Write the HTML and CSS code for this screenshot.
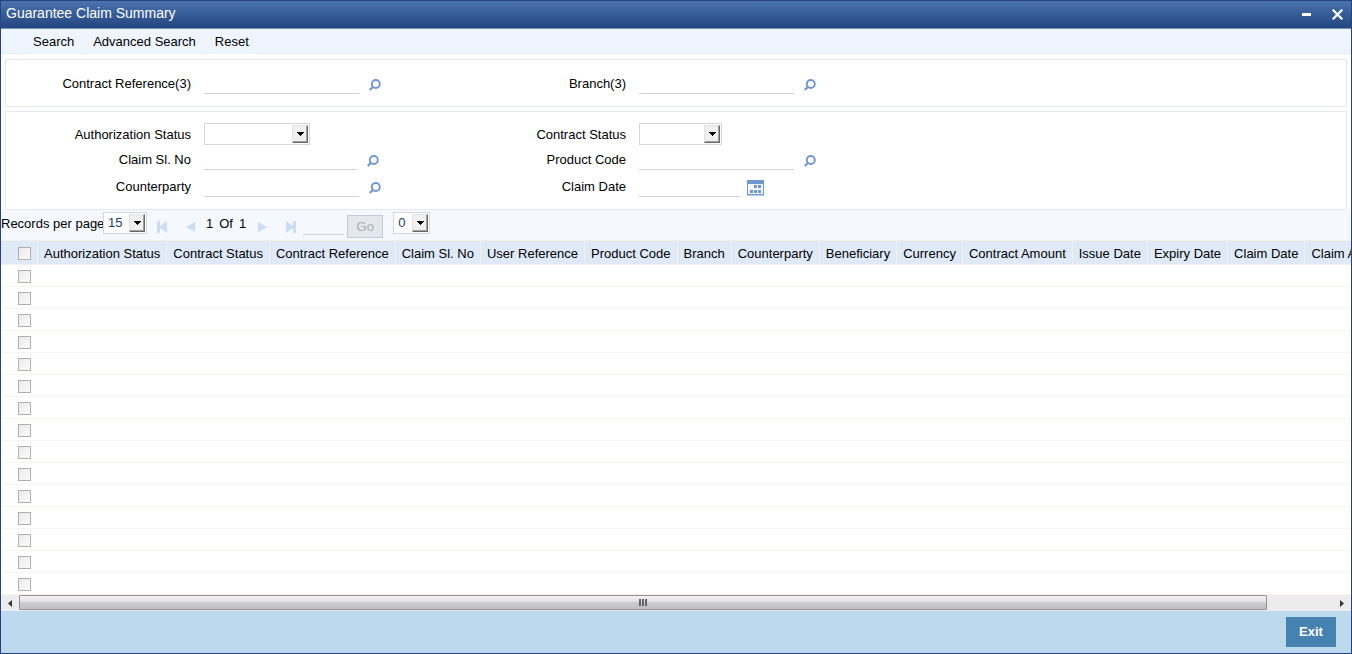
FILE: index.html
```
<!DOCTYPE html>
<html lang="en">
<head>
<meta charset="utf-8">
<meta name="viewport" content="width=device-width, initial-scale=1">
<title>Guarantee Claim Summary</title>
<link rel="stylesheet" href="styles.css">
</head>
<body>
<svg class="defs" width="0" height="0">
  <symbol id="lens" viewBox="0 0 12 12">
    <circle cx="6.8" cy="5" r="4" fill="none" stroke="#6f98d3" stroke-width="1.9"/>
    <path d="M4 7.8 L0.8 11" stroke="#6f98d3" stroke-width="2.2"/>
  </symbol>
  <symbol id="down" viewBox="0 0 7 4">
    <path d="M0 0H7V1H6V2H5V3H4V4H3V3H2V2H1V1H0Z" fill="#000"/>
  </symbol>
</svg>
<div class="window">
  <header class="titlebar">
    <h1>Guarantee Claim Summary</h1>
    <button class="winbtn" aria-label="Minimize"><svg width="11" height="11" shape-rendering="crispEdges"><path d="M1 4H10V7H1Z" fill="#fff"/></svg></button>
    <button class="winbtn" aria-label="Close"><svg width="11" height="11"><path d="M0.7 0.7L10.3 10.3M10.3 0.7L0.7 10.3" stroke="#fff" stroke-width="2.2"/></svg></button>
  </header>
  <nav class="toolbar">
    <button>Search</button>
    <button>Advanced Search</button>
    <button>Reset</button>
  </nav>

  <form class="criteria">
    <section class="box box-top">
      <div class="field">
        <label for="contractRef">Contract Reference(3)</label>
        <input type="text" id="contractRef">
        <button type="button" class="lov" aria-label="Find contract reference"><svg width="12" height="12"><use href="#lens"/></svg></button>
      </div>
      <div class="field">
        <label for="branch">Branch(3)</label>
        <input type="text" id="branch">
        <button type="button" class="lov" aria-label="Find branch"><svg width="12" height="12"><use href="#lens"/></svg></button>
      </div>
    </section>
    <section class="box">
      <div class="field">
        <label for="authStatus">Authorization Status</label>
        <span class="drop drop-wide"><select id="authStatus"><option></option><option>Authorized</option></select><span class="arrow"><svg width="7" height="4"><use href="#down"/></svg></span></span>
      </div>
      <div class="field">
        <label for="contractStatus">Contract Status</label>
        <span class="drop drop-mid"><select id="contractStatus"><option></option><option>Active</option></select><span class="arrow"><svg width="7" height="4"><use href="#down"/></svg></span></span>
      </div>
      <div class="field">
        <label for="claimNo">Claim Sl. No</label>
        <input type="text" id="claimNo" class="number">
        <button type="button" class="lov" aria-label="Find claim"><svg width="12" height="12"><use href="#lens"/></svg></button>
      </div>
      <div class="field">
        <label for="product">Product Code</label>
        <input type="text" id="product">
        <button type="button" class="lov" aria-label="Find product"><svg width="12" height="12"><use href="#lens"/></svg></button>
      </div>
      <div class="field">
        <label for="counterparty">Counterparty</label>
        <input type="text" id="counterparty">
        <button type="button" class="lov" aria-label="Find counterparty"><svg width="12" height="12"><use href="#lens"/></svg></button>
      </div>
      <div class="field">
        <label for="claimDate">Claim Date</label>
        <input type="text" id="claimDate" class="date">
        <button type="button" class="cal" aria-label="Pick date">
          <svg width="17" height="16" shape-rendering="crispEdges">
            <rect width="17" height="16" fill="#b9d0ef"/>
            <rect width="17" height="15" fill="#6f98d3"/>
            <rect x="1" y="4" width="15" height="10" fill="#f4f8fe"/>
            <path d="M7 5h3v3H7zM11 5h3v3h-3zM3 10h3v3H3zM7 10h3v3H7zM11 10h3v3h-3z" fill="#6f98d3"/>
          </svg>
        </button>
      </div>
    </section>
  </form>

  <div class="pager">
    <label for="perPage">Records per page</label>
    <span class="drop drop-page"><select id="perPage"><option>15</option><option>20</option></select><span class="arrow"><svg width="7" height="4"><use href="#down"/></svg></span></span>
    <div class="steps">
      <button aria-label="First page" disabled><svg width="10" height="12"><path d="M0 0H3V5L10 0V12L3 7V12H0Z"/></svg></button>
      <button aria-label="Previous page" disabled><svg width="10" height="12"><path d="M10 1V11L1 6Z"/></svg></button>
      <span class="count"><span>1</span><span>Of</span><span>1</span></span>
      <button aria-label="Next page" disabled><svg width="10" height="12"><path d="M0 1V11L9 6Z"/></svg></button>
      <button aria-label="Last page" disabled><svg width="10" height="12"><path d="M10 0H7V5L0 0V12L7 7V12H10Z"/></svg></button>
    </div>
    <input type="text" class="goto" aria-label="Page number">
    <button class="go" disabled>Go</button>
    <span class="drop drop-lock"><select aria-label="Locked columns"><option>0</option><option>1</option></select><span class="arrow"><svg width="7" height="4"><use href="#down"/></svg></span></span>
  </div>

  <div class="results">
    <table>
      <thead>
        <tr>
          <th class="pick"><input type="checkbox" aria-label="Select all"></th>
          <th>Authorization Status</th>
          <th>Contract Status</th>
          <th>Contract Reference</th>
          <th>Claim Sl. No</th>
          <th>User Reference</th>
          <th>Product Code</th>
          <th>Branch</th>
          <th>Counterparty</th>
          <th>Beneficiary</th>
          <th>Currency</th>
          <th>Contract Amount</th>
          <th>Issue Date</th>
          <th>Expiry Date</th>
          <th>Claim Date</th>
          <th>Claim Amount</th>
        </tr>
      </thead>
      <tbody>
        <tr><td class="pick"><input type="checkbox" aria-label="Select row 1"></td><td colspan="15"></td></tr>
        <tr><td class="pick"><input type="checkbox" aria-label="Select row 2"></td><td colspan="15"></td></tr>
        <tr><td class="pick"><input type="checkbox" aria-label="Select row 3"></td><td colspan="15"></td></tr>
        <tr><td class="pick"><input type="checkbox" aria-label="Select row 4"></td><td colspan="15"></td></tr>
        <tr><td class="pick"><input type="checkbox" aria-label="Select row 5"></td><td colspan="15"></td></tr>
        <tr><td class="pick"><input type="checkbox" aria-label="Select row 6"></td><td colspan="15"></td></tr>
        <tr><td class="pick"><input type="checkbox" aria-label="Select row 7"></td><td colspan="15"></td></tr>
        <tr><td class="pick"><input type="checkbox" aria-label="Select row 8"></td><td colspan="15"></td></tr>
        <tr><td class="pick"><input type="checkbox" aria-label="Select row 9"></td><td colspan="15"></td></tr>
        <tr><td class="pick"><input type="checkbox" aria-label="Select row 10"></td><td colspan="15"></td></tr>
        <tr><td class="pick"><input type="checkbox" aria-label="Select row 11"></td><td colspan="15"></td></tr>
        <tr><td class="pick"><input type="checkbox" aria-label="Select row 12"></td><td colspan="15"></td></tr>
        <tr><td class="pick"><input type="checkbox" aria-label="Select row 13"></td><td colspan="15"></td></tr>
        <tr><td class="pick"><input type="checkbox" aria-label="Select row 14"></td><td colspan="15"></td></tr>
        <tr><td class="pick"><input type="checkbox" aria-label="Select row 15"></td><td colspan="15"></td></tr>
      </tbody>
    </table>
  </div>
  <div class="scrollbar">
    <span class="end"><svg width="4" height="7"><path d="M4 0V7L0 3.5Z" fill="#333"/></svg></span>
    <div class="track"><div class="thumb"><svg width="9" height="7" shape-rendering="crispEdges"><path d="M0 0h2v7H0zM3 0h2v7H3zM6 0h2v7H6z" fill="#666"/></svg></div></div>
    <span class="end"><svg width="4" height="7"><path d="M0 0V7L4 3.5Z" fill="#333"/></svg></span>
  </div>
  <footer class="footer">
    <button class="exit">Exit</button>
  </footer>
</div>
</body>
</html>
```
FILE: styles.css
```
* {
  box-sizing: border-box;
}
body {
  margin: 0;
  font-family: "Liberation Sans", Arial, sans-serif;
  font-size: 13px;
  line-height: 16px;
  color: #000;
}
button, input, select {
  font: inherit;
  color: inherit;
  margin: 0;
  padding: 0;
  border: none;
  border-radius: 0;
  background: none;
}
svg {
  display: block;
}
.defs {
  position: absolute;
}
.window {
  display: flex;
  flex-direction: column;
  height: 100vh;
  border: 1px solid #24437f;
  background: #fff;
}

.titlebar {
  display: flex;
  align-items: center;
  gap: 20px;
  height: 28px;
  padding: 0 8px 0 5px;
  border-bottom: 1px solid #7490b5;
  background: linear-gradient(#4a73ae, #24457f);
  color: #fff;
}
.titlebar h1 {
  flex: 1;
  margin: 0;
  padding-bottom: 4px;
  font-size: 14px;
  font-weight: normal;
}
.toolbar {
  display: flex;
  gap: 7px;
  height: 25px;
  padding-left: 26px;
  border-bottom: 1px solid #e8eaee;
  background: #eff5ff;
}
.toolbar button {
  height: 25px;
  padding: 0 6px;
  background: #eff5ff;
}

.criteria {
  display: flex;
  flex-direction: column;
  gap: 4px;
  padding: 5px 4px 0;
}
.box {
  display: grid;
  grid-template-columns: 435px 435px;
  grid-template-rows: 22px 25px 27px;
  padding: 11px 0 12px;
  border: 1px solid #e3e7f0;
}
.box-top {
  grid-template-rows: 22px;
  padding: 12px 0;
}
.field {
  display: flex;
  align-items: flex-end;
}
.field label {
  width: 185px;
  margin-right: 13px;
  padding-bottom: 2px;
  text-align: right;
}
.field input {
  width: 155px;
  height: 20px;
  border-bottom: 1px solid #d2d3d6;
}
.field .number {
  width: 153px;
}
.field .date {
  width: 101px;
}
.lov {
  margin: 0 0 3px 10px;
}
.cal {
  margin: 0 0 1px 7px;
}

.drop {
  position: relative;
  height: 22px;
  border: 1px solid #d6d6d6;
  background: #fff;
  color: #1f3b70;
}
.drop select {
  display: block;
  width: 100%;
  height: 20px;
  padding-left: 4px;
  appearance: none;
}
/* raised button over the right end of the select */
.arrow {
  position: absolute;
  top: 1px;
  right: 1px;
  display: grid;
  place-items: center;
  width: 16px;
  height: 18px;
  border: 1px solid;
  border-color: #e3e3e3 #696969 #696969 #e3e3e3;
  box-shadow: inset -1px -1px #a0a0a0;
  background: #f0f0f0;
  pointer-events: none;
}
.drop-wide {
  width: 106px;
}
.drop-mid {
  width: 83px;
}
.drop-page {
  width: 44px;
}
.drop-lock {
  width: 37px;
  margin-left: 10px;
}

.pager {
  display: flex;
  align-items: flex-start;
  height: 30px;
  padding-top: 2px;
  background: #f5f9ff;
}
.pager label {
  width: 102px;
  padding-top: 4px;
  white-space: nowrap;
}
.steps {
  display: flex;
  align-items: flex-start;
  margin-left: 10px;
}
.steps button {
  padding-top: 9px;
  margin-right: 18px;
}
.steps path {
  fill: #ccdcf3;
}
.count {
  display: flex;
  gap: 6px;
  padding-top: 4px;
  margin: 0 12px 0 -7px;
}
.goto {
  width: 41px;
  height: 23px;
  margin-left: -11px;
  border-bottom: 1px solid #d2d3d6;
}
.go {
  width: 36px;
  height: 23px;
  margin: 3px 0 0 3px;
  border: 1px solid #c3cad6;
  background: #e4e7ec;
  color: #a9adb5;
}

.results {
  flex: 1;
  min-height: 0;
  overflow: hidden;
}
table {
  border-collapse: separate;
  border-spacing: 0;
}
th {
  height: 25px;
  padding: 2px 6px 0;
  border: solid #f6efe6;
  border-width: 1px 1px 1px 0;
  background: #dfe9f8;
  font-weight: normal;
  white-space: nowrap;
}
td {
  height: 22px;
  padding: 0;
  border-bottom: 1px solid #fbf4e6;
}
.pick {
  width: 37px;
  min-width: 37px;
  padding: 2px 0 0 17px;
}
.pick input {
  display: block;
  width: 13px;
  height: 13px;
  border: 1px solid #b0b0b0;
  background: linear-gradient(135deg, #e9e9e9, #fcfcfc);
  appearance: none;
}

.scrollbar {
  display: flex;
  height: 16px;
  background: #ececec;
}
.end {
  display: grid;
  place-items: center;
  width: 18px;
}
.track {
  flex: 1;
}
.thumb {
  display: grid;
  place-items: center;
  width: 95%;
  height: 15px;
  border: 1px solid #929292;
  border-radius: 1px;
  background: linear-gradient(#f3f3f3, #e2e2e2 45%, #cdcdd0 50%, #bfbfc2);
}
.footer {
  display: flex;
  justify-content: flex-end;
  height: 42px;
  padding: 6px 15px 6px 0;
  background: #bdd9ed;
}
.exit {
  width: 50px;
  background: #4682b0;
  color: #fff;
  font-weight: bold;
}
```
